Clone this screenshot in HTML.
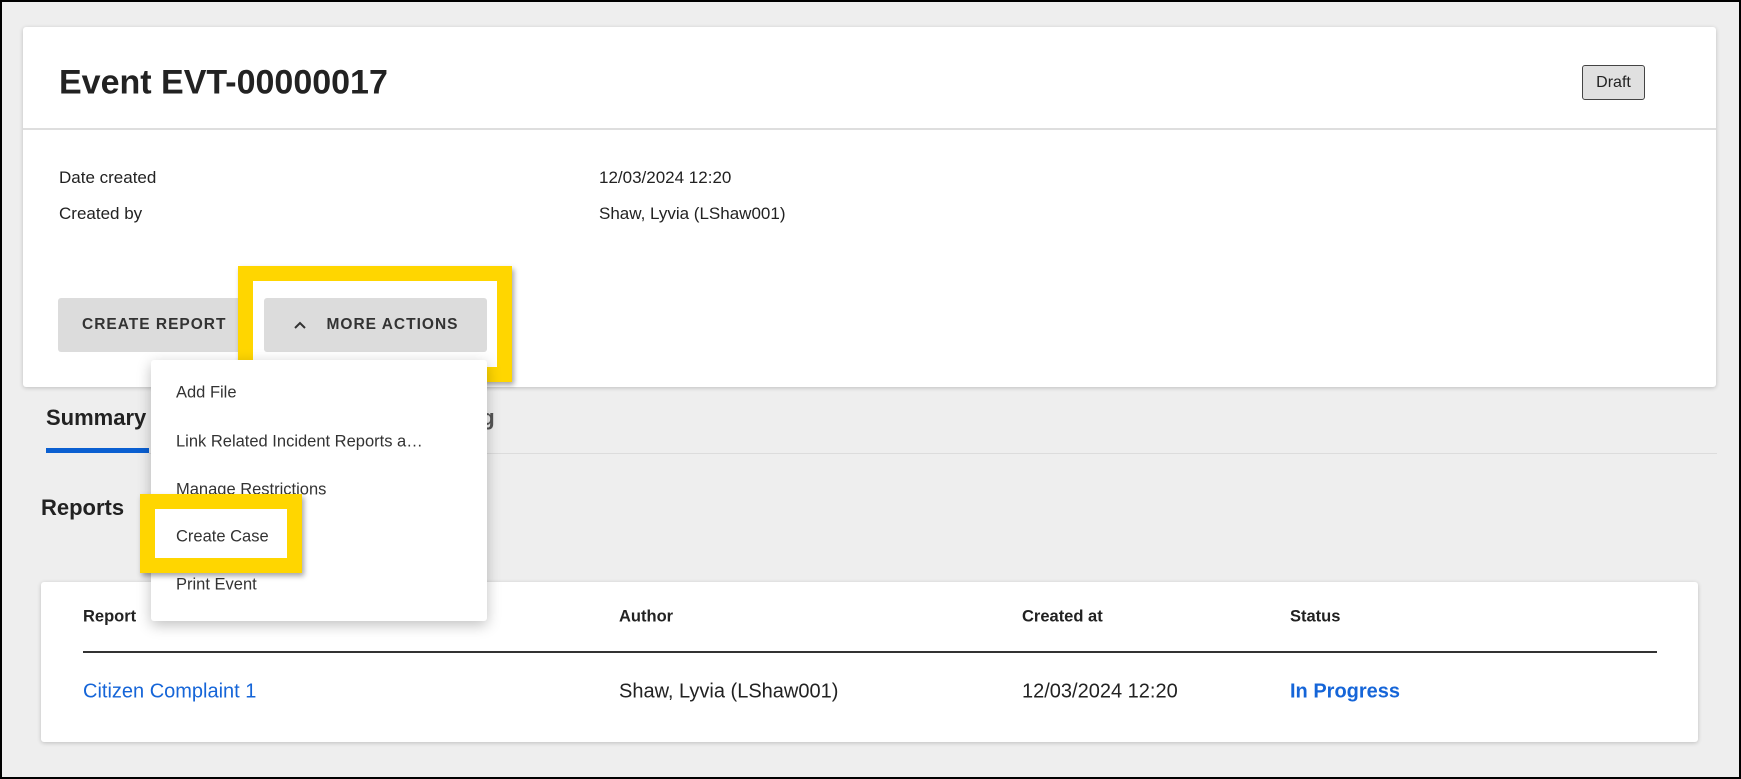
<!DOCTYPE html>
<html><head><meta charset="utf-8"><style>
*{box-sizing:border-box;margin:0;padding:0}
body{width:1741px;height:779px;background:#eeeeee;font-family:"Liberation Sans",Arial,sans-serif;color:#222;position:relative;overflow:hidden}
.abs{position:absolute}
.card{position:absolute;background:#fff;border-radius:3px;box-shadow:0 1px 4px rgba(0,0,0,.2)}
.lbl{font-size:17px;color:#222}
.btn{position:absolute;background:#dcdcdc;border-radius:3px;font-weight:bold;font-size:15.5px;letter-spacing:1px;color:#333;display:flex;align-items:center;justify-content:center}
.y{position:absolute;border:15px solid #ffd600;box-shadow:2px 3px 5px rgba(0,0,0,.35)}
.mi{position:absolute;left:176px;font-size:16.5px;color:#333;transform:translateY(-50%)}
.th{position:absolute;top:617px;transform:translateY(-50%);font-size:16.5px;font-weight:bold;color:#222}
.td{position:absolute;top:692px;transform:translateY(-50%);font-size:20px;color:#222}
</style></head><body>
<div class="card" style="left:23px;top:27px;width:1693px;height:360px"></div>
<div class="abs" style="left:23px;top:128px;width:1693px;height:2px;background:#dedede"></div>
<div class="abs" style="left:59px;top:83px;transform:translateY(-50%);font-size:34px;font-weight:bold;color:#222">Event EVT-00000017</div>
<div class="abs" style="left:1582px;top:65px;width:63px;height:35px;background:#e0e0e0;border:1px solid #444;border-radius:3px;font-size:16px;display:flex;align-items:center;justify-content:center">Draft</div>
<div class="abs lbl" style="left:59px;top:168px">Date created</div>
<div class="abs lbl" style="left:59px;top:204px">Created by</div>
<div class="abs lbl" style="left:599px;top:168px">12/03/2024 12:20</div>
<div class="abs lbl" style="left:599px;top:204px">Shaw, Lyvia (LShaw001)</div>
<div class="btn" style="left:58px;top:298px;width:190px;height:54px;justify-content:flex-start;padding-left:24px">CREATE REPORT</div>
<div class="btn" style="left:264px;top:298px;width:223px;height:54px"><svg width="14" height="10" viewBox="0 0 14 10" style="margin-right:20px"><path d="M2 8 L7 3 L12 8" fill="none" stroke="#333" stroke-width="2"/></svg>MORE ACTIONS</div>
<div class="y" style="left:238px;top:266px;width:274px;height:116px"></div>

<div class="abs" style="left:46px;top:418px;transform:translateY(-50%);font-size:22px;font-weight:bold;color:#222">Summary</div>
<div class="abs" style="left:392px;top:418px;transform:translateY(-50%);font-size:22px;font-weight:bold;color:#555">Audit Log</div>
<div class="abs" style="left:46px;top:448px;width:103px;height:5px;background:#0a5fd1"></div>
<div class="abs" style="left:149px;top:453px;width:1568px;height:1px;background:#dcdcdc"></div>
<div class="abs" style="left:41px;top:508px;transform:translateY(-50%);font-size:22px;font-weight:bold;color:#222">Reports</div>

<div class="card" style="left:41px;top:582px;width:1657px;height:160px"></div>
<div class="th" style="left:83px">Report</div>
<div class="th" style="left:619px">Author</div>
<div class="th" style="left:1022px">Created at</div>
<div class="th" style="left:1290px">Status</div>
<div class="abs" style="left:83px;top:651px;width:1574px;height:2px;background:#333"></div>
<div class="td" style="left:83px;color:#1565d8">Citizen Complaint 1</div>
<div class="td" style="left:619px">Shaw, Lyvia (LShaw001)</div>
<div class="td" style="left:1022px">12/03/2024 12:20</div>
<div class="td" style="left:1290px;color:#1565d8;font-weight:bold">In Progress</div>

<div class="abs" style="left:151px;top:360px;width:336px;height:261px;background:#fff;border-radius:3px;box-shadow:0 4px 14px rgba(0,0,0,.25)"></div>
<div class="mi" style="top:393px">Add File</div>
<div class="mi" style="top:442px">Link Related Incident Reports a…</div>
<div class="mi" style="top:490px">Manage Restrictions</div>
<div class="mi" style="top:537px">Create Case</div>
<div class="mi" style="top:585px">Print Event</div>
<div class="y" style="left:140px;top:494px;width:162px;height:79px"></div>
<div class="abs" style="left:0;top:0;width:1741px;height:779px;border:2px solid #000;pointer-events:none"></div>
</body></html>
